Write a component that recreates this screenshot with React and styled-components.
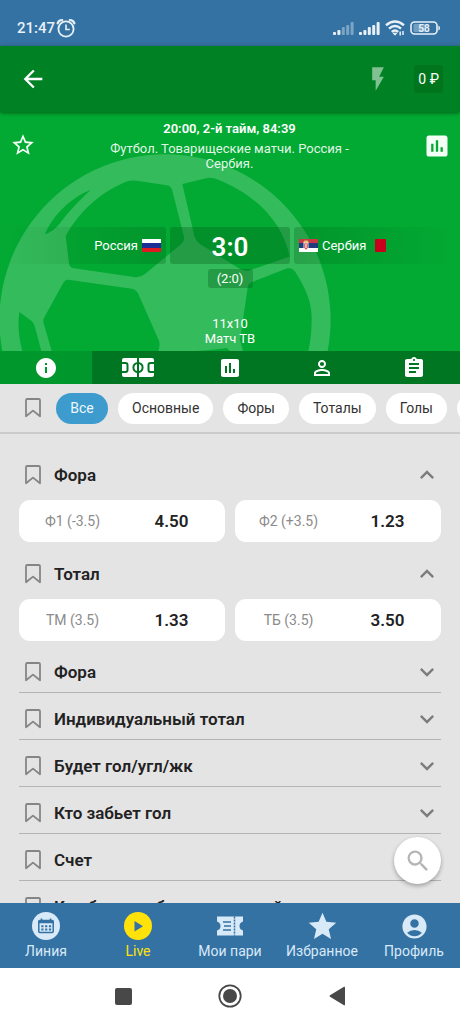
import React, { useState } from 'react';
import styled, { createGlobalStyle } from 'styled-components';
import {
    MdAccountCircle,
    MdArrowBack,
    MdAssignment,
    MdExpandLess,
    MdExpandMore,
    MdFlashOn,
    MdInfo,
    MdPersonOutline,
    MdPoll,
    MdSearch,
    MdStar,
    MdStarBorder,
} from 'react-icons/md';

const GlobalStyle = createGlobalStyle`
    * { box-sizing: border-box; }
    body { margin: 0; font-family: Roboto, "Liberation Sans", sans-serif; }
    button { margin: 0; padding: 0; border: 0; background: none; color: inherit; font: inherit; cursor: pointer; }
    a { color: inherit; text-decoration: none; }
    h1, h2, p { margin: 0; font-size: inherit; font-weight: inherit; }
    svg { display: block; flex: none; }
`;

const Page = styled.div`
    display: flex;
    flex-direction: column;
    height: 100vh;
    background: #e4e4e4;
`;

/* status bar */
const StatusBar = styled.div`
    display: flex;
    align-items: center;
    flex: none;
    gap: 1px;
    height: 46px;
    padding: 9px 20px 0 17px;
    background: #3472a4;
    color: #e9f1f7;
    font-size: 15px;
    font-weight: 500;
`;
const StatusIcons = styled.div`
    display: flex;
    align-items: center;
    gap: 5px;
    margin-left: auto;
`;

/* top bar */
const TopBar = styled.header`
    display: flex;
    align-items: center;
    flex: none;
    height: 66px;
    padding: 0 17px 0 19px;
    background: #008224;
    color: #fff;
    box-shadow: 0 1px 4px rgba(0, 60, 10, 0.7);
    z-index: 1;
`;
const FlashButton = styled.button`
    margin-left: auto;
    margin-right: 22px;
    color: rgba(255, 255, 255, 0.5);
`;
const Balance = styled.button`
    height: 28px;
    padding: 0 4px;
    border-radius: 3px;
    background: #00751d;
    font-size: 14px;
`;

/* match panel */
const Match = styled.section`
    position: relative;
    flex: none;
    background: #02aa33;
    color: #fff;
    font-size: 13px;
    line-height: 15px;
    text-align: center;
`;
const Ball = styled.svg`
    position: absolute;
    left: 0;
    bottom: 0;
`;
const MatchContent = styled.div`
    position: relative;
    padding-bottom: 5px;
`;
const MatchHead = styled.div`
    display: grid;
    grid-template-columns: 26px minmax(0, 240px) 28px;
    justify-content: space-between;
    align-items: start;
    height: 115px;
    padding: 9px 9px 0 10px;
    color: rgba(255, 255, 255, 0.9);

    button {
        margin-top: 11px;
        color: #f4fff6;
    }
`;
const MatchTime = styled.p`
    margin-bottom: 5px;
    font-weight: 600;
    color: #fff;
`;
const Teams = styled.div`
    display: grid;
    grid-template-columns: 1fr 120px 1fr;
    grid-template-rows: 37px;
    gap: 4px;
`;
const Team = styled.div`
    display: flex;
    align-items: center;
    justify-content: ${(p) => (p.$home ? 'flex-end' : 'flex-start')};
    gap: 4px;
    padding: 0 5px;
    border-radius: 3px;
    background: linear-gradient(
        to ${(p) => (p.$home ? 'left' : 'right')},
        rgba(0, 85, 20, 0.25),
        rgba(0, 85, 20, 0)
    );
`;
const RedCard = styled.span`
    width: 11px;
    height: 13px;
    margin-left: 5px;
    border-radius: 1px;
    background: #c8001e;
`;
const Score = styled.div`
    border-radius: 3px;
    background: rgba(0, 85, 20, 0.3);
    font-size: 26px;
    font-weight: 600;
    line-height: 40px;
`;
const HalfScore = styled.div`
    width: 45px;
    margin: 5px auto 28px;
    border-radius: 3px;
    background: rgba(0, 85, 20, 0.3);
    line-height: 19px;
`;

const InfoTabs = styled.nav`
    display: grid;
    grid-template-columns: repeat(5, 1fr);
    flex: none;
    height: 33px;
    background: #007522;
    color: #fff;
`;
const InfoTab = styled.button`
    display: flex;
    align-items: center;
    justify-content: center;
    background: ${(p) => (p.$active ? '#00982d' : 'transparent')};
`;

/* filter chips */
const Filters = styled.div`
    display: flex;
    align-items: center;
    flex: none;
    gap: 10px;
    height: 50px;
    padding-left: 25px;
    border-bottom: 2px solid #cbcbcb;
    overflow: hidden;
`;
const FilterBookmark = styled.button`
    margin-right: 5px;
`;
const Chip = styled.button`
    flex: none;
    min-width: 52px;
    height: 31px;
    padding: 0 14px;
    border-radius: 16px;
    background: ${(p) => (p.$active ? '#3d9bcd' : '#fff')};
    color: ${(p) => (p.$active ? '#eef7fc' : '#333')};
    font-size: 14px;
`;

/* markets */
const MarketArea = styled.main`
    position: relative;
    flex: 1;
    min-height: 0;
`;
const MarketScroll = styled.div`
    height: 100%;
    padding: 14px 19px 0;
    overflow-y: auto;
    scrollbar-width: none;
`;
const MarketRow = styled.div`
    display: flex;
    align-items: center;
    height: ${(p) => (p.$open ? '46px' : '47px')};
    padding: ${(p) => (p.$open ? '7px' : '5px')} 0 0 6px;
    border-bottom: ${(p) => (p.$open ? '0' : '1px solid #b4b4b4')};
`;
const MarketToggle = styled.button`
    display: flex;
    align-items: center;
    justify-content: space-between;
    flex: 1;
    margin-left: 13px;
    color: #7c7c7c;

    h2 {
        color: #222;
        font-size: 17px;
        font-weight: 600;
        line-height: 20px;
        white-space: nowrap;
    }
`;
const Odds = styled.div`
    display: grid;
    grid-template-columns: 1fr 1fr;
    gap: 10px;
    padding: 6px 0 5px;
`;
const Odd = styled.button`
    display: grid;
    grid-template-columns: 1fr 1fr;
    align-items: center;
    height: 42px;
    padding: 0 4px;
    border-radius: 11px;
    background: #fff;
    color: #8b8b8b;
    font-size: 14px;

    strong {
        color: #222;
        font-size: 17px;
        font-weight: 600;
    }
`;
const SearchButton = styled.button`
    position: absolute;
    right: 19px;
    bottom: 19px;
    display: flex;
    align-items: center;
    justify-content: center;
    width: 47px;
    height: 47px;
    border-radius: 50%;
    background: #fff;
    color: #b5b5b5;
    box-shadow: 0 2px 4px rgba(0, 0, 0, 0.3);
`;

/* bottom navigation */
const BottomNav = styled.nav`
    display: grid;
    grid-template-columns: repeat(5, 1fr);
    flex: none;
    height: 65px;
    background: #3472a4;
`;
const NavLink = styled.a`
    display: flex;
    flex-direction: column;
    align-items: center;
    gap: 2px;
    padding-top: 9px;
    color: ${(p) => (p.$active ? '#ffe20a' : '#d8e9f8')};
    font-size: 14px;
    line-height: 18px;
    white-space: nowrap;
`;
const NavIcon = styled.span`
    display: flex;
    align-items: center;
    justify-content: center;
    height: 28px;
`;
const SystemNav = styled.div`
    display: flex;
    justify-content: center;
    flex: none;
    height: 56px;
    background: #fff;
`;
const SystemButton = styled.button`
    display: flex;
    align-items: center;
    justify-content: center;
    width: 107px;
`;

const AlarmIcon = () => (
    <svg width="20" height="20" viewBox="0 0 20 20" fill="none" stroke="currentColor">
        <circle cx="10" cy="11" r="7.6" strokeWidth="1.8" />
        <path d="M10 6.5v5h3.8" strokeWidth="1.6" />
        <path d="M1.6 5.4Q2.6 2 6.2 2M18.4 5.4Q17.4 2 13.8 2" strokeWidth="2.2" strokeLinecap="round" />
    </svg>
);

const SignalIcon = ({ bars }) => (
    <svg width="21" height="14" viewBox="0 0 21 14" fill="currentColor">
        {[3, 5, 8, 10, 13].map((h, i) => (
            <rect key={h} x={i * 4.4} y={14 - h} width="3" height={h} rx="1" opacity={i < bars ? 1 : 0.4} />
        ))}
    </svg>
);

const WifiIcon = () => (
    <svg width="20" height="16" viewBox="0 0 20 16" fill="none" stroke="currentColor" strokeWidth="2.4">
        <path d="M1 5.2Q10-2.2 19 5.2M4 8.6Q10 3.6 16 8.6M6.8 11.9Q10 9 13.2 11.9" />
        <path d="M8 13.2l2 2 1.8-2z" fill="currentColor" strokeWidth="1" />
        <path d="M15.2 15.5v-4M18 11v4" strokeWidth="1.5" />
    </svg>
);

const BatteryIcon = () => (
    <svg width="30" height="14" viewBox="0 0 30 14">
        <rect x="1" y="1" width="26" height="12" rx="3.5" fill="none" stroke="currentColor" strokeWidth="1.6" />
        <rect x="3.5" y="3" width="12" height="8" rx="1" fill="currentColor" opacity="0.35" />
        <path d="M28.4 4.5q1.6.5 1.6 2.5t-1.6 2.5z" fill="currentColor" />
        <text x="14" y="10.6" fontSize="10" fontWeight="700" textAnchor="middle" fill="currentColor">58</text>
    </svg>
);

const BookmarkIcon = () => (
    <svg width="16" height="20" viewBox="0 0 16 20" fill="none" stroke="#858585" strokeWidth="1.8">
        <path d="M1 18.3V2.3Q1 1 2.3 1h11.4Q15 1 15 2.3v16L8 12.6z" strokeLinejoin="round" />
    </svg>
);

const BallArt = () => (
    <Ball width="340" height="211" viewBox="0 0 1020 633" aria-hidden="true">
        <path
            fill="#fff"
            fillOpacity="0.2"
            fillRule="evenodd"
            d="M495 43A497 497 0 0 1 983 633H7A497 497 0 0 1 495 43Z
            M197 288C240 210 310 150 385 123Q400 120 420 124L500 136Q514 138 517 152L552 290Q555 302 544 312L435 402Q420 414 402 411L222 385Q208 384 207 370Z
            M547 132L625 113Q640 112 655 119C770 165 850 250 869 350L745 392Q730 394 715 384L600 312Q588 305 584 292Z
            M752 428L862 385Q878 382 886 396C920 450 935 490 935 535Q935 590 925 633H729L720 600L742 450Q743 432 752 428Z
            M205 419L395 446Q408 448 414 460L477 602Q481 615 475 633H155L131 550Q128 540 134 530L190 428Q195 418 205 419Z
            M135 283C155 230 215 170 272 150C240 180 205 215 180 250Q160 275 135 283Z
            M58 516L95 543Q102 550 105 562L124 633H67Q50 570 58 516Z
            M590 632Q640 630 680 624L690 633Z"
        />
    </Ball>
);

const RussiaFlag = () => (
    <svg width="19" height="13" viewBox="0 0 19 13">
        <path fill="#fff" d="M0 0h19v13H0z" />
        <path fill="#1b2f94" d="M0 4h19v5H0z" />
        <path fill="#e01a22" d="M0 9h19v4H0z" />
    </svg>
);

const SerbiaFlag = () => (
    <svg width="19" height="13" viewBox="0 0 19 13">
        <path fill="#c93a47" d="M0 0h19v4H0z" />
        <path fill="#203c7c" d="M0 4h19v5H0z" />
        <path fill="#fff" d="M0 9h19v4H0z" />
        <path fill="#f2dcd8" d="M4.5 2.5h5v6L7 11.5 4.5 8.5z" />
        <path fill="#c93a47" d="M5.3 4.5h3.4v4L7 10.4 5.3 8.5z" />
        <path fill="#e8c46a" d="M5.3 1.5h3.4v2H5.3z" />
        <path fill="#fff" d="M6.4 5h1.2v4H6.4z" />
    </svg>
);

const PitchIcon = () => (
    <svg width="32" height="19" viewBox="0 0 32 19">
        <rect width="32" height="19" rx="2" fill="#fff" />
        <g fill="none" stroke="#007522" strokeWidth="2">
            <path d="M16 0v19M0 5h3.5q2 0 2 2v5q0 2-2 2H0M32 5h-3.5q-2 0-2 2v5q0 2 2 2H32" />
            <circle cx="16" cy="9.5" r="4.6" />
        </g>
    </svg>
);

const CalendarIcon = () => (
    <svg width="28" height="28" viewBox="0 0 28 28">
        <circle cx="14" cy="14" r="14" fill="currentColor" />
        <g stroke="#3472a4" fill="none">
            <rect x="6.8" y="8.5" width="14.4" height="12" rx="1" strokeWidth="1.5" />
            <path d="M6.5 10h15" strokeWidth="2.5" />
            <path d="M9.5 6.5v3M18.5 6.5v3" strokeWidth="1.6" />
            <path d="M9.3 14.2h9.8M9.3 17.5h9.8" strokeWidth="2" strokeDasharray="2.2 1.6" />
        </g>
    </svg>
);

const LiveIcon = () => (
    <svg width="28" height="28" viewBox="0 0 28 28">
        <circle cx="14" cy="14" r="14" fill="currentColor" />
        <path d="M10.5 9v10.5l8.5-5.2z" fill="#3472a4" />
    </svg>
);

const TicketIcon = () => (
    <svg width="26" height="20" viewBox="0 0 26 20">
        <path d="M0 .5h26v5q-3.5 1-3.5 4.5t3.5 4.5v5H0v-5q3.5-1 3.5-4.5T0 5.5z" fill="currentColor" />
        <path d="M6 6h8M7 10h7M6 14h8" stroke="#3472a4" strokeWidth="1.5" />
        <path d="M17.5.5v19" stroke="#3472a4" strokeWidth="1.5" strokeDasharray="2 1" />
    </svg>
);

const filters = ['Все', 'Основные', 'Форы', 'Тоталы', 'Голы'];

const infoTabs = [
    { label: 'Информация', icon: <MdInfo size={24} /> },
    { label: 'Поле', icon: <PitchIcon /> },
    { label: 'Статистика', icon: <MdPoll size={24} /> },
    { label: 'Составы', icon: <MdPersonOutline size={24} /> },
    { label: 'События', icon: <MdAssignment size={24} /> },
];

const initialMarkets = [
    { title: 'Фора', open: true, odds: [['Ф1 (-3.5)', '4.50'], ['Ф2 (+3.5)', '1.23']] },
    { title: 'Тотал', open: true, odds: [['ТМ (3.5)', '1.33'], ['ТБ (3.5)', '3.50']] },
    { title: 'Фора', odds: [] },
    { title: 'Индивидуальный тотал', odds: [] },
    { title: 'Будет гол/угл/жк', odds: [] },
    { title: 'Кто забьет гол', odds: [] },
    { title: 'Счет', odds: [] },
    { title: 'Как будет забит следующий гол', odds: [] },
];

const navItems = [
    { label: 'Линия', icon: <CalendarIcon /> },
    { label: 'Live', icon: <LiveIcon />, active: true },
    { label: 'Мои пари', icon: <TicketIcon /> },
    { label: 'Избранное', icon: <MdStar size={33} /> },
    { label: 'Профиль', icon: <MdAccountCircle size={29} /> },
];

function Market({ market, onToggle }) {
    const { title, open, odds } = market;
    return (
        <section>
            <MarketRow $open={open}>
                <button aria-label={`Закрепить: ${title}`}>
                    <BookmarkIcon />
                </button>
                <MarketToggle aria-expanded={!!open} onClick={onToggle}>
                    <h2>{title}</h2>
                    {open ? <MdExpandLess size={28} /> : <MdExpandMore size={28} />}
                </MarketToggle>
            </MarketRow>
            {open && odds.length > 0 && (
                <Odds>
                    {odds.map(([name, value]) => (
                        <Odd key={name}>
                            <span>{name}</span>
                            <strong>{value}</strong>
                        </Odd>
                    ))}
                </Odds>
            )}
        </section>
    );
}

function App() {
    const [filter, setFilter] = useState('Все');
    const [tab, setTab] = useState(0);
    const [markets, setMarkets] = useState(initialMarkets);

    const toggle = (index) =>
        setMarkets(markets.map((m, i) => (i === index ? { ...m, open: !m.open } : m)));

    return (
        <Page>
            <GlobalStyle />
            <StatusBar>
                <span>21:47</span>
                <AlarmIcon />
                <StatusIcons>
                    <SignalIcon bars={2} />
                    <SignalIcon bars={5} />
                    <WifiIcon />
                    <BatteryIcon />
                </StatusIcons>
            </StatusBar>
            <TopBar>
                <button aria-label="Назад">
                    <MdArrowBack size={28} />
                </button>
                <FlashButton aria-label="Быстрая ставка">
                    <MdFlashOn size={28} />
                </FlashButton>
                <Balance>0 ₽</Balance>
            </TopBar>
            <Match>
                <BallArt />
                <MatchContent>
                    <MatchHead>
                        <button aria-label="В избранное">
                            <MdStarBorder size={26} />
                        </button>
                        <div>
                            <MatchTime>20:00, 2-й тайм, 84:39</MatchTime>
                            <h1>Футбол. Товарищеские матчи. Россия - Сербия.</h1>
                        </div>
                        <button aria-label="Статистика матча">
                            <MdPoll size={28} />
                        </button>
                    </MatchHead>
                    <Teams>
                        <Team $home>
                            Россия <RussiaFlag />
                        </Team>
                        <Score>3:0</Score>
                        <Team>
                            <SerbiaFlag /> Сербия <RedCard />
                        </Team>
                    </Teams>
                    <HalfScore>(2:0)</HalfScore>
                    <p>11x10</p>
                    <p>Матч ТВ</p>
                </MatchContent>
            </Match>
            <InfoTabs>
                {infoTabs.map((item, i) => (
                    <InfoTab key={item.label} aria-label={item.label} $active={i === tab} onClick={() => setTab(i)}>
                        {item.icon}
                    </InfoTab>
                ))}
            </InfoTabs>
            <Filters>
                <FilterBookmark aria-label="Закрепленные">
                    <BookmarkIcon />
                </FilterBookmark>
                {filters.map((name) => (
                    <Chip key={name} $active={name === filter} onClick={() => setFilter(name)}>
                        {name}
                    </Chip>
                ))}
                <Chip aria-label="Еще" />
            </Filters>
            <MarketArea>
                <MarketScroll>
                    {markets.map((market, i) => (
                        <Market key={i} market={market} onToggle={() => toggle(i)} />
                    ))}
                </MarketScroll>
                <SearchButton aria-label="Поиск">
                    <MdSearch size={28} />
                </SearchButton>
            </MarketArea>
            <BottomNav>
                {navItems.map((item) => (
                    <NavLink key={item.label} href="#" $active={item.active}>
                        <NavIcon>{item.icon}</NavIcon>
                        {item.label}
                    </NavLink>
                ))}
            </BottomNav>
            <SystemNav>
                <SystemButton aria-label="Недавние">
                    <svg width="17" height="17" viewBox="0 0 17 17">
                        <rect width="17" height="17" rx="2" fill="#484848" />
                    </svg>
                </SystemButton>
                <SystemButton aria-label="Домой">
                    <svg width="24" height="24" viewBox="0 0 24 24">
                        <circle cx="12" cy="12" r="10.7" fill="none" stroke="#484848" strokeWidth="1.8" />
                        <circle cx="12" cy="12" r="7" fill="#484848" />
                    </svg>
                </SystemButton>
                <SystemButton aria-label="Системная кнопка назад">
                    <svg width="17" height="20" viewBox="0 0 17 20">
                        <path d="M1 9.2L15 .8q1-.5 1 .7v17q0 1.2-1 .7L1 10.8q-1-.8 0-1.6z" fill="#484848" />
                    </svg>
                </SystemButton>
            </SystemNav>
        </Page>
    );
}

export default App;
